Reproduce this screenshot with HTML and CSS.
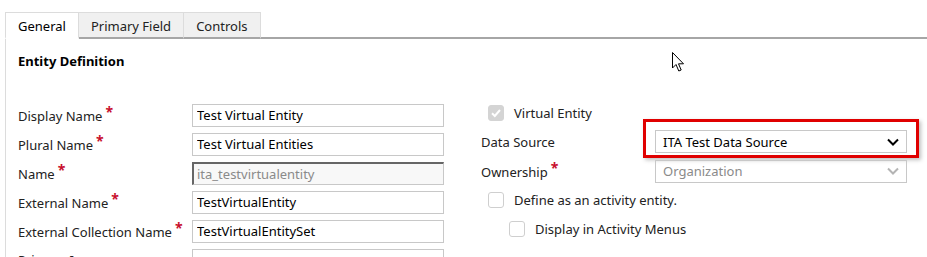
FILE: index.html
```html
<!DOCTYPE html>
<html lang="en">
<head>
    <meta charset="UTF-8">
    <title>Entity - General</title>
    <link rel="stylesheet" href="styles.css">
</head>
<body>

    <div class="tabs">
        <div class="tab active">General</div>
        <div class="tab">Primary Field</div>
        <div class="tab">Controls</div>
        <div class="tab-rest"></div>
    </div>

    <div class="panel">
        <h3 class="section-title">Entity Definition</h3>

        <div class="columns">
            <div class="col">
                <div class="row">
                    <label class="label">Display Name<span class="req">*</span></label>
                    <input class="field" type="text" value="Test Virtual Entity">
                </div>
                <div class="row">
                    <label class="label">Plural Name<span class="req">*</span></label>
                    <input class="field" type="text" value="Test Virtual Entities">
                </div>
                <div class="row">
                    <label class="label">Name<span class="req">*</span></label>
                    <input class="field locked" type="text" value="ita_testvirtualentity" disabled>
                </div>
                <div class="row">
                    <label class="label">External Name<span class="req">*</span></label>
                    <input class="field" type="text" value="TestVirtualEntity">
                </div>
                <div class="row">
                    <label class="label">External Collection Name<span class="req">*</span></label>
                    <input class="field" type="text" value="TestVirtualEntitySet">
                </div>
                <div class="row">
                    <label class="label">Primary Image</label>
                    <input class="field" type="text" value="">
                </div>
            </div>

            <div class="col right">
                <div class="row check-row">
                    <span class="box checked-off">
                        <svg width="12" height="12" viewBox="0 0 12 12"><path d="M2 6.2 L4.8 9 L10 3" fill="none" stroke="#fff" stroke-width="2"/></svg>
                    </span>
                    <span>Virtual Entity</span>
                </div>
                <div class="row">
                    <label class="label">Data Source</label>
                    <div class="highlight">
                        <div class="select">
                            <span>ITA Test Data Source</span>
                            <svg width="14" height="10" viewBox="0 0 14 10"><path d="M2 2.5 L7 7.5 L12 2.5" fill="none" stroke="#000" stroke-width="2"/></svg>
                        </div>
                    </div>
                </div>
                <div class="row">
                    <label class="label">Ownership<span class="req">*</span></label>
                    <div class="select off">
                        <span>Organization</span>
                        <svg width="14" height="10" viewBox="0 0 14 10"><path d="M2 2.5 L7 7.5 L12 2.5" fill="none" stroke="#b4b4b4" stroke-width="2"/></svg>
                    </div>
                </div>
                <div class="row check-row">
                    <span class="box"></span>
                    <span>Define as an activity entity.</span>
                </div>
                <div class="row check-row sub">
                    <span class="box"></span>
                    <span>Display in Activity Menus</span>
                </div>
            </div>
        </div>
    </div>

    <svg class="cursor" width="14" height="22" viewBox="0 0 14 22">
        <path d="M0.5 0.5 L0.5 16 L4 12.5 L6.8 19 L9.2 18 L6.5 11.8 L11.5 11.8 Z" fill="#fff" stroke="#000" stroke-width="1"/>
    </svg>

</body>
</html>
```

FILE: styles.css
```css
body {
    margin: 0;
    background: #fff;
    color: #000;
    font-family: "Noto Sans", "Open Sans", sans-serif;
    font-size: 13px;
    height: 257px;
    overflow: hidden;
    position: relative;
}
.tabs {
    display: flex;
    margin-top: 12px;
    padding-left: 5px;
    height: 27px;
}
.tab {
    padding: 0 12px;
    line-height: 26px;
    border: 1px solid #dcdcdc;
    border-bottom: 2px solid #a6a6a6;
    border-left: none;
    background: #f0f0f0;
    color: #222;
}
.tab.active {
    background: #fff;
    border-left: 1px solid #dcdcdc;
    border-bottom: 2px solid #fff;
    color: #000;
}
.tab-rest {
    flex: 1;
    border-bottom: 2px solid #a6a6a6;
}
.panel {
    margin-left: 5px;
    border-left: 1px solid #dcdcdc;
    padding-left: 12px;
    height: 240px;
}
.section-title {
    margin: 0;
    padding-top: 13px;
    font-size: 13px;
    font-weight: bold;
    line-height: 18px;
}
.columns {
    display: flex;
    gap: 37px;
    margin-top: 34px;
}
.col {
    display: flex;
    flex-direction: column;
    gap: 7px;
}
.col.right {
    margin-top: -2px;
}
.row {
    display: flex;
    align-items: center;
    height: 22px;
}
.label {
    width: 174px;
    flex: none;
    color: #222;
}
.req {
    color: #c8102e;
    margin-left: 3px;
    font-size: 14px;
    font-weight: bold;
    position: relative;
    top: -4px;
}
.field {
    box-sizing: border-box;
    width: 252px;
    height: 23px;
    border: 1px solid #c8c8c8;
    padding: 0 4px;
    font: inherit;
    color: #000;
    background: #fff;
}
.field.locked {
    background: #f8f8f8;
    color: #8a8a8a;
    border-top: 2px solid #666;
    border-left: 2px solid #666;
    padding-left: 3px;
}
.highlight {
    padding: 8px 9px 2px 9px;
    margin: -11px -11px -4px -12px;
    border: 3px solid #e00000;
    box-shadow: 2px 2px 4px rgba(0, 0, 0, 0.25);
}
.select {
    box-sizing: border-box;
    width: 252px;
    height: 23px;
    border: 1px solid #c8c8c8;
    display: flex;
    align-items: center;
    justify-content: space-between;
    padding: 0 6px 0 7px;
}
.select.off {
    color: #8a8a8a;
}
.check-row {
    padding-left: 7px;
    gap: 10px;
    color: #222;
}
.check-row.sub {
    padding-left: 28px;
    height: 21px;
}
.box {
    box-sizing: border-box;
    width: 16px;
    height: 16px;
    border: 1px solid #cfcfcf;
    border-radius: 3px;
    background: #fff;
    display: flex;
    align-items: center;
    justify-content: center;
}
.box.checked-off {
    background: #d4d4d4;
    border-color: #d4d4d4;
}
.cursor {
    position: absolute;
    left: 672px;
    top: 52px;
}
```
